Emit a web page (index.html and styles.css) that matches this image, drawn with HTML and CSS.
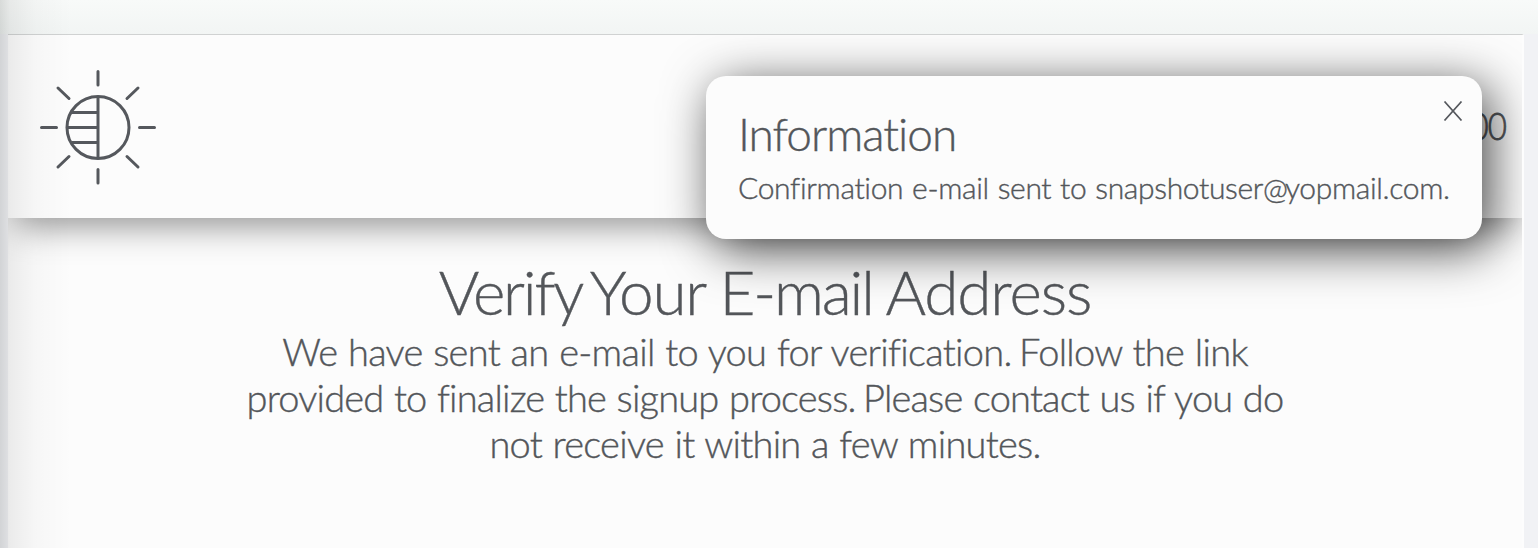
FILE: index.html
```
<!DOCTYPE html>
<html lang="en">
<head>
<meta charset="utf-8">
<title>Verify Your E-mail Address</title>
<link rel="stylesheet" href="styles.css">
</head>
<body>
<div class="page">
  <div class="panel">
    <header class="header">
      <svg class="logo" width="116" height="116" viewBox="0 0 116 116" fill="none" stroke="#55585d" stroke-width="3" stroke-linecap="round">
        <circle cx="58" cy="58.500" r="31"/>
        <path d="M58 27.500v62M32 43.500h26M27 58.500h31M32 73.500h26" stroke-linecap="butt"/>
        <path d="M58 2.500v13.500M58 100.500v13.500M1.500 58.500h15M99.500 58.500h15M18 19l11 10.500M98 19l-11 10.500M18 98l11-10.500M98 98l-11-10.500"/>
      </svg>
      <span class="balance">0.00</span>
    </header>
    <main class="content">
      <h1 class="title"><span class="tight first">Verify</span> <span>Your</span> <span class="tight">E-mail</span> <span>Address</span></h1>
      <p class="message">
        <span class="line line-a">We have sent an e-mail to you for verification.<span class="stop"> </span>Follow the link</span>
        <span class="line line-b">provided to finalize the signup process.<span class="stop"> </span>Please contact us if you do</span>
        <span class="line line-c">not receive it within a few minutes.</span>
      </p>
    </main>
    <div class="toast">
      <h2 class="toast-title">Information</h2>
      <p class="toast-text">Confirmation e-mail sent to snapshotuser<span class="at">@</span>yopmail.com.</p>
      <svg class="close" width="20" height="20" viewBox="0 0 20 20" fill="none" stroke="#55585d" stroke-width="1.700"><path d="M1.500 .5l17 19M18.500 .5l-17 19"/></svg>
    </div>
  </div>
</div>
</body>
</html>
```
FILE: styles.css
```
* { box-sizing: border-box; margin: 0; }
body {
  height: 548px;
  overflow: hidden;
  background: #f1f2f5;
  color: #53565a;
  font-family: Lato, "Open Sans", sans-serif;
  font-weight: 300;
  -webkit-text-stroke: .4px #53565a;
}
.page {
  position: relative;
  height: 548px;
  padding: 34px 14px 0 8px;
  background: linear-gradient(#f8faf9, #f2f5f4) top / 100% 34px no-repeat;
}
/* Soft shade along the left edge of the window */
.page::after {
  content: "";
  position: absolute;
  inset: 0 auto 0 0;
  width: 72px;
  background: linear-gradient(90deg, rgba(0,8,4,.13), rgba(0,0,0,.065) 14%, rgba(0,0,0,.025) 48%, transparent);
}
.panel {
  position: relative;
  height: 514px;
  overflow: hidden;
  background: #fcfcfc;
  border-top: 1px solid #d0d2d2;
  border-right: 2px solid #fdfdfd;
}
.header {
  display: flex;
  justify-content: space-between;
  align-items: center;
  height: 183px;
  padding: 0 16px 0 32px;
  position: relative;
  background: #fcfcfc;
  box-shadow: 0 16px 32px -8px rgba(0,0,0,.42);
}
.logo { display: block; margin-top: 1px; }
.balance { margin-top: -3px; font-size: 38px; line-height: 46px; letter-spacing: -1px; transform: scaleX(.87); transform-origin: right; -webkit-text-stroke-width: .8px; }
.content { padding: 37px 0 0; text-align: center; position: relative; }
.title { font-size: 62px; line-height: 72px; font-weight: 300; white-space: nowrap; letter-spacing: -1.1px; word-spacing: -1px; }
.tight { letter-spacing: -2.2px; }
.first { margin-right: -5px; }
.message { padding-top: 1px; font-size: 38px; line-height: 46px; word-spacing: 1px; }
.line { display: block; white-space: nowrap; }
.line-a { letter-spacing: -.7px; }
.line-b { letter-spacing: -.81px; }
.line-c { letter-spacing: -.74px; }
.stop { letter-spacing: -4px; }
.toast {
  position: absolute;
  top: 41px;
  right: 40px;
  width: 776px;
  height: 163px;
  padding: 30px 32px;
  border-radius: 20px;
  background: #fcfcfc;
  box-shadow: 8px 10px 50px rgba(0,0,0,.72);
  white-space: nowrap;
}
.toast-title { font-size: 46px; line-height: 56px; font-weight: 300; letter-spacing: -1px; }
.toast-text { font-size: 30px; line-height: 50px; letter-spacing: -.33px; word-spacing: 1px; }
.at { letter-spacing: -3px; }
.close { position: absolute; top: 25px; right: 19px; }
```
